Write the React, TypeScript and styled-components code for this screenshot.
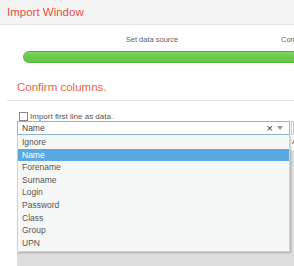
import styled, { createGlobalStyle } from "styled-components";

const GlobalStyle = createGlobalStyle`
  html, body {
    margin: 0;
    padding: 0;
    background: #ffffff;
    overflow: hidden;
  }
  body {
    font-family: "Liberation Sans", Arial, sans-serif;
    color: #555;
  }
`;

const options = [
  "Ignore",
  "Name",
  "Forename",
  "Surname",
  "Login",
  "Password",
  "Class",
  "Group",
  "UPN",
];

function App() {
  const selected = "Name";

  return (
    <>
      <GlobalStyle />
      <Window>
        <Header>Import Window</Header>

        <Stepper>
          <StepLabels>
            <StepLabel $align="center">Set data source</StepLabel>
            <StepLabel $align="left">Confirm columns</StepLabel>
          </StepLabels>
          <ProgressBar />
        </Stepper>

        <Section>
          <Heading>Confirm columns.</Heading>
          <Rule />

          <Body>
            <CheckRow>
              <CheckBox />
              <span>Import first line as data.</span>
            </CheckRow>

            <ColumnRow>
              <SelectWrap>
                <Select>
                  <SelectValue>{selected}</SelectValue>
                  <Clear>×</Clear>
                  <Arrow />
                </Select>

                <Menu>
                  {options.map((o) => (
                    <Option key={o} $active={o === selected}>
                      {o}
                    </Option>
                  ))}
                </Menu>
              </SelectWrap>
              <NextSelect />
            </ColumnRow>

            <Preview>
              <PreviewRow>
                <PreviewCell />
                <PreviewCell>A</PreviewCell>
              </PreviewRow>
            </Preview>
          </Body>
        </Section>
      </Window>
    </>
  );
}

const Window = styled.div`
  width: 294px;
  height: 266px;
  overflow: hidden;
  display: flex;
  flex-direction: column;
`;

const Header = styled.div`
  height: 25px;
  box-sizing: border-box;
  padding: 6px 0 0 7px;
  background: #f4f4f4;
  border-bottom: 1px solid #e2e2e2;
  color: #e8503c;
  font-size: 11.5px;
`;

const Stepper = styled.div`
  padding: 10px 0 0 23px;
  width: 560px;
`;

const StepLabels = styled.div`
  display: grid;
  grid-template-columns: 258px 258px;
  font-size: 7.5px;
  color: #666;
  height: 16px;
`;

const StepLabel = styled.div<{ $align: string }>`
  text-align: ${(p) => p.$align};
`;

const ProgressBar = styled.div`
  height: 12px;
  box-sizing: border-box;
  border-radius: 6px 0 0 6px;
  border: 1px solid #55b33d;
  background: linear-gradient(#7bd75f 0%, #6acb4d 40%, #66c649 100%);
`;

const Section = styled.div`
  padding: 18px 0 0 7px;
  flex: 1;
  display: flex;
  flex-direction: column;
`;

const Heading = styled.div`
  padding-left: 10px;
  color: #ec6545;
  font-size: 11.5px;
  height: 19px;
`;

const Rule = styled.div`
  height: 1px;
  background: #e3e3e3;
  margin-right: -10px;
`;

const Body = styled.div`
  padding: 10px 0 0 10px;
  flex: 1;
  display: flex;
  flex-direction: column;
`;

const CheckRow = styled.div`
  display: flex;
  align-items: center;
  gap: 2px;
  padding-left: 2px;
  font-size: 8px;
  color: #555;
  height: 10px;
`;

const CheckBox = styled.span`
  width: 7px;
  height: 7px;
  border: 1px solid #888;
  background: #fff;
`;

const ColumnRow = styled.div`
  display: flex;
  gap: 1px;
  position: relative;
  z-index: 2;
`;

const SelectWrap = styled.div`
  position: relative;
  width: 273px;
  flex: none;
`;

const Select = styled.div`
  height: 14px;
  box-sizing: border-box;
  border: 1px solid #8bb6de;
  background: #fff;
  display: flex;
  align-items: center;
  padding: 0 6px 0 4px;
  font-size: 8.5px;
  color: #444;
`;

const SelectValue = styled.span`
  flex: 1;
`;

const Clear = styled.span`
  font-size: 11px;
  color: #333;
  margin-right: 4px;
  line-height: 1;
`;

const Arrow = styled.span`
  width: 0;
  height: 0;
  border-left: 3.5px solid transparent;
  border-right: 3.5px solid transparent;
  border-top: 4px solid #999;
`;

const NextSelect = styled.div`
  width: 40px;
  height: 14px;
  box-sizing: border-box;
  border: 1px solid #ccc;
  background: #fff;
`;

const Menu = styled.div`
  position: absolute;
  left: 0;
  top: 14px;
  width: 273px;
  box-sizing: border-box;
  background: #f6f8f8;
  border: 1px solid #cfd3d3;
  border-top: none;
  box-shadow: 1px 1px 2px rgba(0, 0, 0, 0.25);
  padding: 1px 0 2px;
`;

const Option = styled.div<{ $active: boolean }>`
  height: 12.6px;
  line-height: 12.6px;
  padding-left: 4px;
  font-size: 8.5px;
  color: ${(p) => (p.$active ? "#fff" : "#555")};
  background: ${(p) => (p.$active ? "#5aa9e2" : "transparent")};
`;

const Preview = styled.div`
  flex: 1;
  background: #dedede;
`;

const PreviewRow = styled.div`
  display: grid;
  grid-template-columns: 274px 1fr;
  height: 15px;
`;

const PreviewCell = styled.div`
  background: #fff;
  font-size: 8px;
  color: #555;
  padding: 2px 0 0 1px;
`;

export default App;
